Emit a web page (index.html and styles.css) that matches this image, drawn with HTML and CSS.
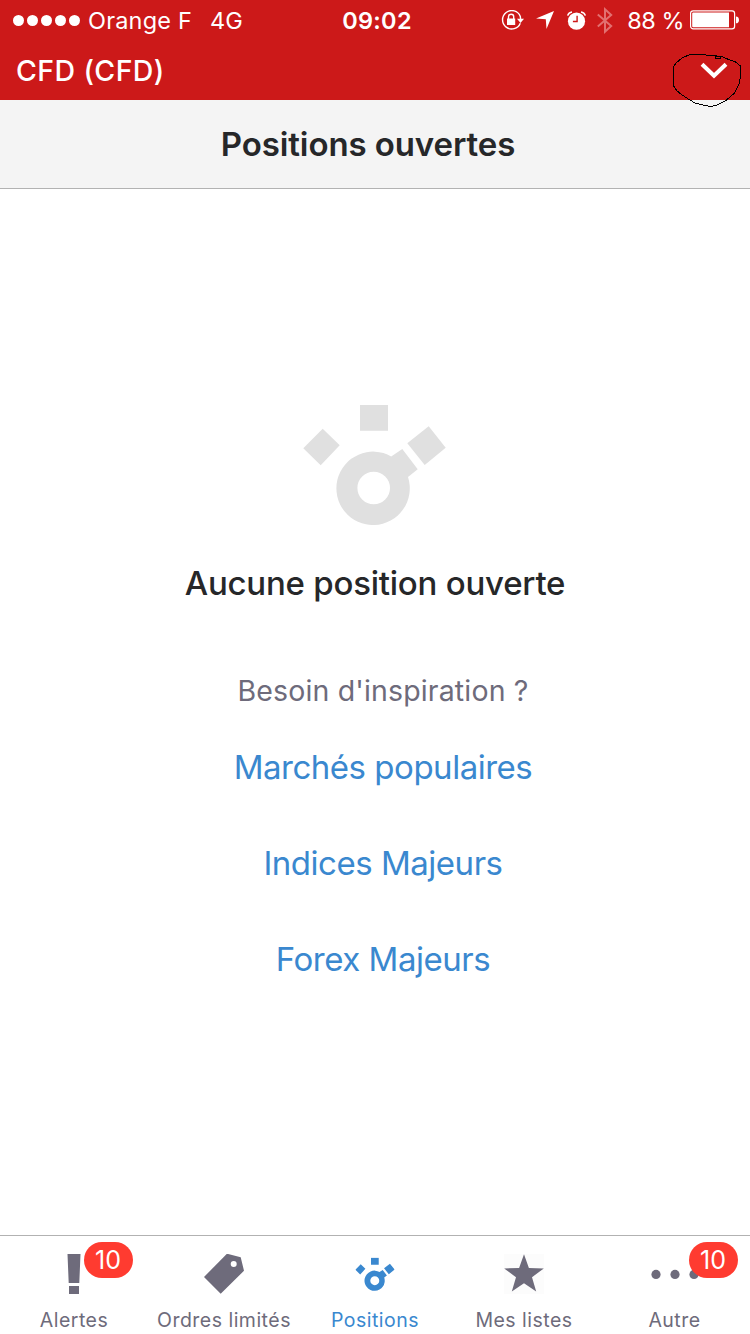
FILE: index.html
```html
<!DOCTYPE html>
<html lang="fr">
<head>
  <meta charset="UTF-8">
  <meta name="viewport" content="width=device-width, initial-scale=1.0">
  <title>Positions ouvertes</title>
  <link rel="stylesheet" href="styles.css">
</head>
<body>
  <svg class="sprite" width="0" height="0">
    <symbol id="logo" viewBox="0 0 143 120">
      <path d="M57 0h28v25.7H57zM.3 43.3 19.7 23.7 36.7 40.3 17.7 60.3zM104.3 38.3 125.7 21.3 142.7 42.7 121.7 60z"/>
      <path d="M88.2 51.4 99.3 44 114.7 64.3 105 72A36.7 36.7 0 1 1 88.2 51.4zM70.7 66.7a16.3 16.3 0 1 0 0 32.6 16.3 16.3 0 0 0 0-32.6z"/>
    </symbol>
  </svg>

  <div class="app">
    <div class="status-bar">
      <div class="status-left">
        <div class="signal"><i></i><i></i><i></i><i></i><i></i></div>
        <span class="carrier">Orange F</span>
        <span class="network">4G</span>
      </div>
      <span class="time">09:02</span>
      <div class="status-right">
        <svg class="icon-lock" width="23" height="20" viewBox="0 0 23 20">
          <path d="M19.3 13.2A9.2 9.2 0 1 1 19.3 6.4L19.6 9" fill="none" stroke="#fff" stroke-width="1.4"/>
          <path d="M16 8.8h7l-3.5 4.2z" fill="#fff"/>
          <path d="M6 8.5h8.2v6.5H6z" fill="#fff"/>
          <path d="M7.5 9V6.8a2.6 2.6 0 0 1 5.2 0V9" fill="none" stroke="#fff" stroke-width="1.4"/>
        </svg>
        <svg class="icon-location" width="18" height="18" viewBox="0 0 18 18">
          <path d="M0 7.5 18 0 10.5 18 9.8 8.2z" fill="#fff"/>
        </svg>
        <svg class="icon-alarm" width="19" height="19" viewBox="0 0 19 19">
          <circle cx="9.5" cy="10.2" r="8.6" fill="#fff"/>
          <path d="M.7 4.6A5 5 0 0 1 5 .9M14 .9a5 5 0 0 1 4.3 3.7" fill="none" stroke="#fff" stroke-width="1.5"/>
          <path d="M10.1 4.8v5.7H5.9" fill="none" stroke="#cc1919" stroke-width="1.4"/>
        </svg>
        <svg class="icon-bluetooth" width="16" height="27" viewBox="0 0 16 27">
          <path d="M.8 7.5 14.2 19 8 24.7V2.3L14.2 8 .8 19.5" fill="none" stroke="#e27070" stroke-width="2"/>
        </svg>
        <span class="percent">88 %</span>
        <svg class="icon-battery" width="49" height="20" viewBox="0 0 49 20">
          <rect x=".6" y=".9" width="44" height="18" rx="2.6" fill="none" stroke="#fff" stroke-width="1.2"/>
          <path d="M2.2 3.5a1 1 0 0 1 1-1H39v14.8H3.2a1 1 0 0 1-1-1z" fill="#fff"/>
          <path d="M46 6.5c1.7 0 3 1.2 3 3.4s-1.3 3.4-3 3.4z" fill="#fff"/>
        </svg>
      </div>
    </div>

    <div class="account-bar">
      <span class="account-name">CFD (CFD)</span>
      <svg class="chevron" width="28" height="18" viewBox="0 0 28 18">
        <path d="M2 2.2 14 13.8 26 2.2" fill="none" stroke="#fff" stroke-width="4"/>
      </svg>
      <svg class="ink" width="71" height="55" viewBox="0 0 71 55" shape-rendering="crispEdges">
        <path d="M45 3 29 1.5H18L10 5 4 10 1 15v17l4 6 8 6 10 6 8 2 7 1.5 6-1 10-5 8-7 5-9 1.5-8V13l-5-4-8-3-7-3h-5v2h5v-1" fill="none" stroke="#000" stroke-width="1"/>
      </svg>
    </div>

    <div class="title-bar">
      <h1 class="title">Positions ouvertes</h1>
    </div>

    <div class="content">
      <svg class="empty-logo"><use href="#logo"/></svg>
      <h2 class="empty-title">Aucune position ouverte</h2>
      <div class="inspiration">
        <p class="inspiration-text">Besoin d'inspiration ?</p>
        <a class="link">Marchés populaires</a>
        <a class="link">Indices Majeurs</a>
        <a class="link">Forex Majeurs</a>
      </div>
    </div>

    <div class="tab-bar">
      <a class="tab">
        <svg class="tab-icon" viewBox="0 0 40 40"><path d="M13.5 0h13l-1.2 29H14.7zM15 32h10v8H15z"/></svg>
        <span class="label">Alertes</span>
        <span class="badge">10</span>
      </a>
      <a class="tab">
        <svg class="tab-icon" viewBox="0 0 40 40"><path fill-rule="evenodd" d="M0 23 23-.3 36.7 3.3 40 16.7 16.7 39.8zM29.7 7a3 3 0 1 0 0 6 3 3 0 0 0 0-6z"/></svg>
        <span class="label">Ordres limités</span>
      </a>
      <a class="tab active">
        <svg class="tab-icon" viewBox="0 0 40 40"><use href="#logo" x=".3" y="3.6" width="39.4" height="33.4"/></svg>
        <span class="label">Positions</span>
      </a>
      <a class="tab">
        <svg class="tab-icon star" viewBox="0 0 40 40"><path d="M20 .2 24.9 14 39.8 14.4 28 23.3 32.2 37.6 20 29.2 7.8 37.6 12 23.3.2 14.4 15.1 14z"/></svg>
        <span class="label">Mes listes</span>
      </a>
      <a class="tab tab-other">
        <svg class="tab-icon dots" viewBox="0 0 48 40"><circle cx="5" cy="20.4" r="4.6"/><circle cx="24" cy="20.4" r="4.6"/><circle cx="43" cy="20.4" r="4.6"/></svg>
        <span class="label">Autre</span>
        <span class="badge badge-other">10</span>
      </a>
    </div>
  </div>
</body>
</html>
```
FILE: styles.css
```css
* {
  box-sizing: border-box;
}
body {
  margin: 0;
  background-color: #ffffff;
  font-family: Inter, "Liberation Sans", sans-serif;
  color: #262729;
}
svg {
  display: block;
  flex: none;
}
.sprite {
  position: absolute;
}
.app {
  display: flex;
  flex-direction: column;
  width: 750px;
  height: 1334px;
  overflow: hidden;
  white-space: nowrap;
}
.status-bar {
  display: grid;
  grid-template-columns: 1fr auto 1fr;
  align-items: center;
  height: 40px;
  padding: 0 11px 0 13px;
  background-color: #cc1919;
  color: #ffffff;
  font-size: 23.5px;
}
.status-left,
.status-right {
  display: flex;
  align-items: center;
}
.status-right {
  justify-content: flex-end;
}
.signal {
  display: flex;
  gap: 3px;
  margin-right: 8px;
}
.signal i {
  width: 11px;
  height: 11px;
  border-radius: 50%;
  background-color: #ffffff;
}
.carrier {
  margin-right: 18px;
  letter-spacing: 0.2px;
}
.time {
  padding-left: 2px;
  font-weight: 600;
  letter-spacing: 0.3px;
}
.icon-location {
  margin-left: 12px;
}
.icon-alarm {
  margin-left: 13px;
}
.icon-bluetooth {
  margin-left: 11px;
}
.percent {
  margin-left: 14px;
  margin-right: 6px;
  letter-spacing: -0.5px;
}
.account-bar {
  position: relative;
  display: flex;
  justify-content: space-between;
  height: 60px;
  padding: 0 22px 0 16px;
  background-color: #cc1919;
  color: #ffffff;
}
.account-name {
  font-size: 28.5px;
  font-weight: 500;
  letter-spacing: 0.4px;
  line-height: 62px;
}
.chevron {
  margin-top: 22px;
}
.ink {
  position: absolute;
  top: 13px;
  right: 7px;
}
.title-bar {
  height: 89px;
  padding-right: 14px;
  background-color: #f4f4f4;
  border-bottom: 1px solid #b2b2b2;
  text-align: center;
}
.title {
  margin: 0;
  font-size: 33px;
  font-weight: 600;
  letter-spacing: -0.1px;
  line-height: 88px;
}
.content {
  display: flex;
  flex: 1;
  flex-direction: column;
  align-items: center;
  padding-top: 216px;
}
.empty-logo {
  width: 143px;
  height: 120px;
  margin-right: 2px;
  fill: #e0e0e0;
}
.empty-title {
  margin: 38px 0 0;
  font-size: 33px;
  font-weight: 500;
  letter-spacing: -0.23px;
  line-height: 40px;
}
.inspiration {
  display: flex;
  flex-direction: column;
  align-items: center;
  padding-left: 16px;
  margin-top: 68px;
}
.inspiration-text {
  margin: 0 0 8px;
  color: #6e6b7b;
  font-size: 28.5px;
  letter-spacing: 0.15px;
  line-height: 40px;
}
.link {
  color: #3a88cf;
  font-size: 33px;
  letter-spacing: -0.48px;
  line-height: 96px;
}
.tab-bar {
  display: grid;
  grid-template-columns: repeat(5, 150px);
  height: 99px;
  border-top: 1px solid #b2b2b2;
}
.tab {
  position: relative;
  display: flex;
  flex-direction: column;
  align-items: center;
  padding-top: 18px;
  padding-right: 2px;
  color: #6e6b7b;
  fill: #6e6b7b;
}
.tab.active {
  padding-right: 0;
  color: #3a88cf;
  fill: #3a88cf;
}
.tab-other {
  padding-right: 1px;
}
.tab-icon {
  width: 40px;
  height: 40px;
}
.tab-icon.star {
  background-color: #fcfcfc;
}
.tab-icon.dots {
  width: 48px;
}
.label {
  margin-top: 14px;
  font-size: 19.5px;
  letter-spacing: 0.48px;
  line-height: 24px;
}
.badge {
  position: absolute;
  top: 6px;
  left: 84px;
  width: 49px;
  height: 36px;
  padding-right: 1px;
  border-radius: 18px;
  background-color: #ff3b30;
  color: #ffffff;
  font-size: 25px;
  line-height: 36px;
  text-align: center;
}
.badge-other {
  left: 89px;
}
```
